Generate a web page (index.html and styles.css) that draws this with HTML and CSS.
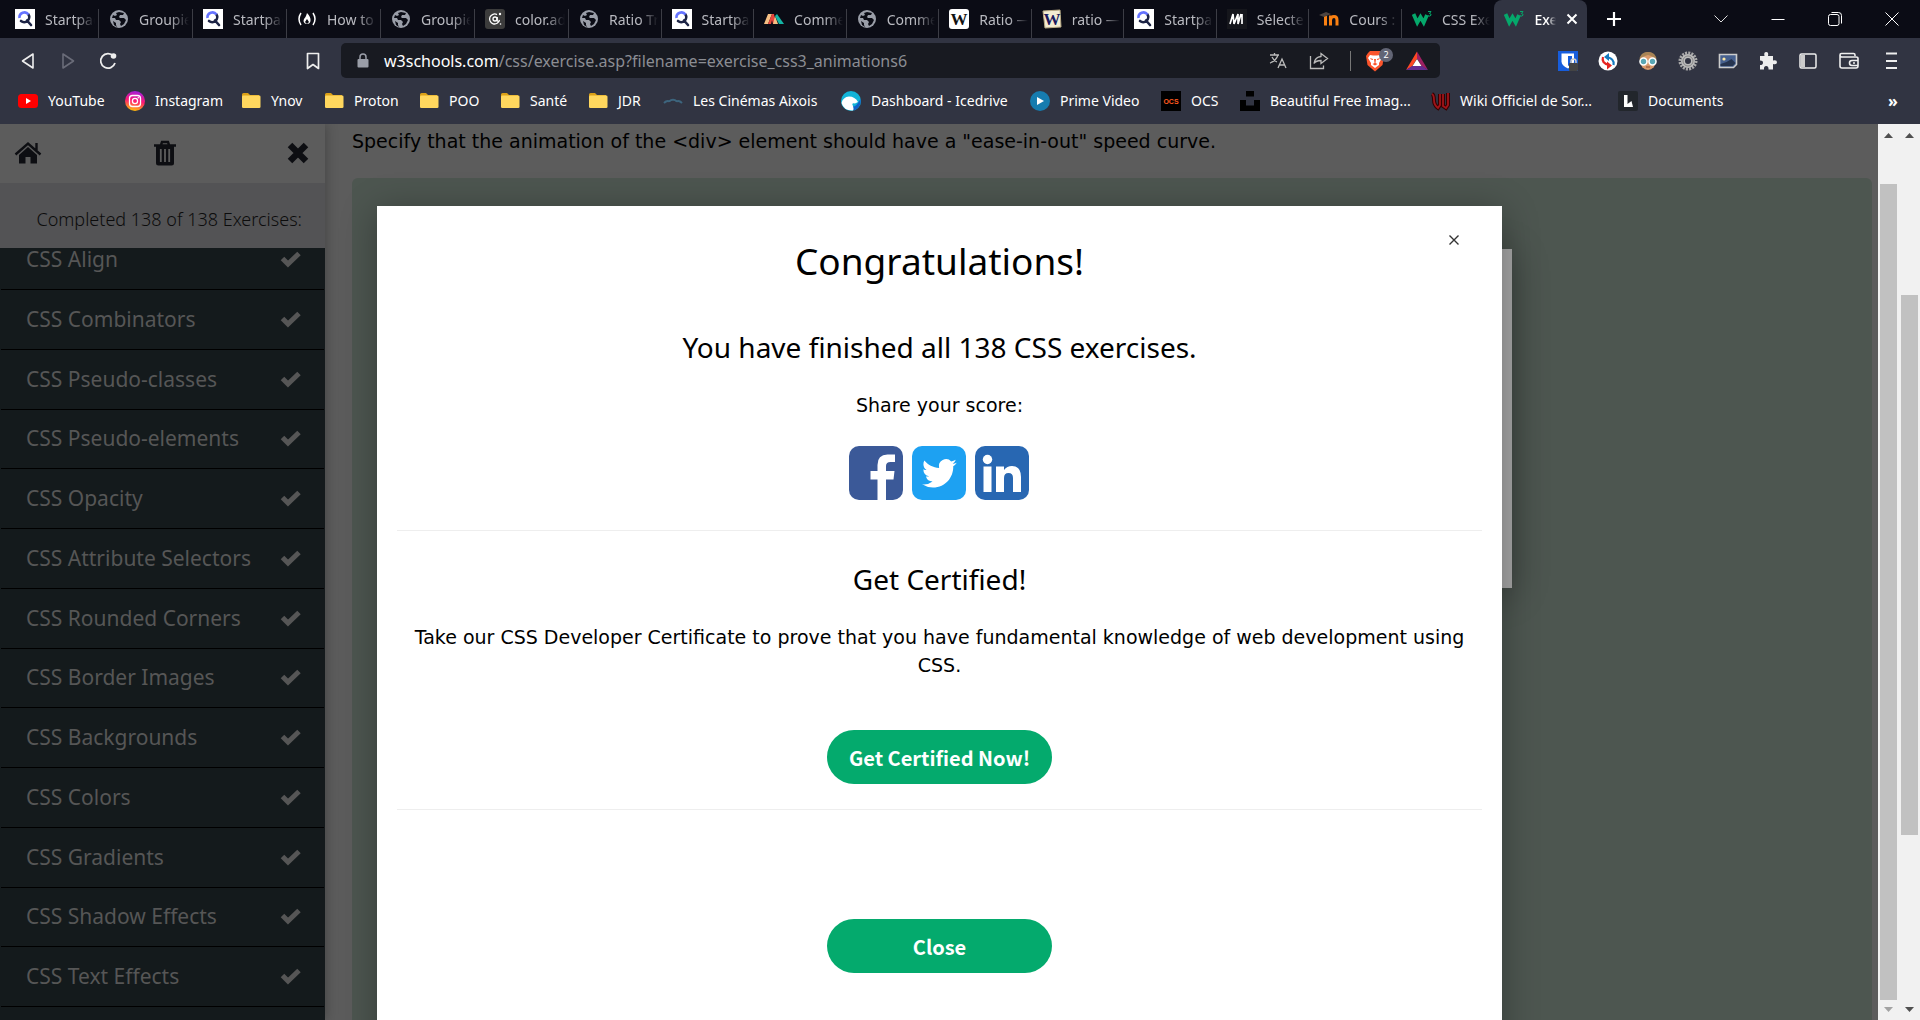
FILE: index.html
```html
<!DOCTYPE html>
<html lang="en">
<head>
<meta charset="utf-8">
<title>CSS Exercise</title>
<link rel="stylesheet" href="styles.css">
</head>
<body>
<svg class="sprite" aria-hidden="true">
  <symbol id="startpage" viewBox="0 0 20 20"><path fill="#fff" d="M0 0h20v20H0z"/><path d="M13.300 5.300A5 5 0 0 1 6 12M12 11.500l4 4.500" fill="none" stroke="#1d2445" stroke-width="2.600" stroke-linecap="round"/><path d="M4.500 9a5 5 0 0 1 9-3.500" fill="none" stroke="#6573ff" stroke-width="2.600"/></symbol>
  <symbol id="globe" viewBox="0 0 20 20"><circle cx="10" cy="10" r="9" fill="#9a9ea8"/><path fill="#0b0c15" d="M10 3l5 1-1 2h-3l-1 2 1 1h4l2 2-2 4-3 2-1-2 1-2-2-2-3 0-1-2H3l1-3 2 1 2-1-1-2zM4 12l3 2v2l1 2-3-2z"/></symbol>
  <symbol id="folder" viewBox="0 0 20 20"><path fill="#dba017" d="M1 3.500Q1 2 2.500 2H7l2 2h9v12H1z"/><rect x="1" y="4.500" width="18.500" height="12.500" rx="1.300" fill="#ffd75e"/></symbol>
  <symbol id="w3" viewBox="0 0 20 20"><path d="M1.500 5l3.800 8.500 3.200-5.500 3.200 5.500L15 6" fill="none" stroke="#05a86b" stroke-width="3.800"/><path d="M16 2.500h3l-1.500 2q2 .3 1.500 1.700-.8 1.500-3 .6" fill="none" stroke="#05a86b"/></symbol>
  <symbol id="check" viewBox="0 0 22 18"><path d="M2.500 8.500l5.500 5.500L19 3.500" fill="none" stroke="currentColor" stroke-width="5"/></symbol>
</svg>

<header class="browser">
  <div class="tabbar">
    <nav class="tabs" aria-label="Tabs">
      <a class="tab" href="#"><svg class="ico"><use href="#startpage"/></svg><span class="tab-label">Startpage</span></a>
      <a class="tab" href="#"><svg class="ico"><use href="#globe"/></svg><span class="tab-label">Groupie</span></a>
      <a class="tab" href="#"><svg class="ico"><use href="#startpage"/></svg><span class="tab-label">Startpage</span></a>
      <a class="tab" href="#"><svg class="ico" viewBox="0 0 20 20"><path d="M4 4q-4 6 0 12M16 4q4 6 0 12" fill="none" stroke="#fff" stroke-width="1.500"/><path fill="#fff" d="M10 4q4 4 3.500 8-.5 3-3.500 3t-3.500-3q0-2 2-4 1-2 1.500-4z"/><path fill="#0b0c15" d="M10 10l2 3-2 2-2-2z"/></svg><span class="tab-label">How to</span></a>
      <a class="tab" href="#"><svg class="ico"><use href="#globe"/></svg><span class="tab-label">Groupie</span></a>
      <a class="tab" href="#"><svg class="ico" viewBox="0 0 20 20"><rect width="20" height="20" rx="3" fill="#3c3c3c"/><path d="M12 5.600a5 5 0 1 0 2.500 5.400q-.5 2-2.300 1V8" fill="none" stroke="#fff" stroke-width="1.300"/><circle cx="10" cy="10" r="2" fill="none" stroke="#fff" stroke-width="1.300"/><circle cx="15" cy="5" r="1.200" fill="#fff"/><circle cx="15.500" cy="15" r=".8" fill="#fff"/></svg><span class="tab-label">color.ad</span></a>
      <a class="tab" href="#"><svg class="ico"><use href="#globe"/></svg><span class="tab-label">Ratio Tr</span></a>
      <a class="tab" href="#"><svg class="ico"><use href="#startpage"/></svg><span class="tab-label">Startpage</span></a>
      <a class="tab" href="#"><svg class="ico" viewBox="0 0 20 20"><path fill="#f6c084" d="M0 15L4 5h4L4 15z"/><path fill="#e8453c" d="M4 15L8 5h2l2 10H9l-1-4-1 4z"/><path fill="#f6c084" d="M9 15l2-8 3 8z"/><path fill="#14b5a5" d="M13 5l7 10h-5l-4-8z"/></svg><span class="tab-label">Comme</span></a>
      <a class="tab" href="#"><svg class="ico"><use href="#globe"/></svg><span class="tab-label">Comme</span></a>
      <a class="tab" href="#"><svg class="ico" viewBox="0 0 20 20"><rect width="20" height="20" rx="3" fill="#fff"/><text x="10" y="16" text-anchor="middle" class="serif-w">W</text></svg><span class="tab-label">Ratio —</span></a>
      <a class="tab" href="#"><svg class="ico" viewBox="0 0 20 20"><path fill="#f3ecd2" stroke="#b9ab86" d="M1 2l17-1 1 17-16 1z"/><text x="10" y="16" text-anchor="middle" class="serif-w navy">W</text></svg><span class="tab-label">ratio —</span></a>
      <a class="tab" href="#"><svg class="ico"><use href="#startpage"/></svg><span class="tab-label">Startpage</span></a>
      <a class="tab" href="#"><svg class="ico" viewBox="0 0 20 20"><path fill="#15161c" d="M0 0h20v20H0z"/><path d="M3 15L6 5l1 10 4-10v10l3-10M15 5v10" fill="none" stroke="#fff" stroke-width="1.700"/></svg><span class="tab-label">Sélecte</span></a>
      <a class="tab" href="#"><svg class="ico" viewBox="0 0 20 20"><path d="M6.500 7v9.500M11.500 16.500V6.500M11.500 11q.5-3.500 3.500-3.500t3 3.500v5.500" fill="none" stroke="#f98012" stroke-width="3"/><path fill="#4d4440" d="M0 6l7-3 5 2-7 3z"/></svg><span class="tab-label">Cours :</span></a>
      <a class="tab last" href="#"><svg class="ico"><use href="#w3"/></svg><span class="tab-label">CSS Exe</span></a>
      <div class="tab active"><svg class="ico"><use href="#w3"/></svg><span class="tab-label">Exe</span><button class="tab-close" aria-label="Close tab"><svg width="12" height="12" viewBox="0 0 12 12"><path d="M1.500 1.500l9 9m0-9l-9 9" stroke="#fff" stroke-width="2"/></svg></button></div>
    </nav>
    <button class="new-tab" aria-label="New tab"><svg width="16" height="16" viewBox="0 0 16 16"><path d="M8 1v14M1 8h14" stroke="#fff" stroke-width="2.200"/></svg></button>
    <div class="window-buttons">
      <button aria-label="Search tabs"><svg width="14" height="14" viewBox="0 0 14 14"><path d="M.5 3.500L7 10l6.500-6.500" fill="none" stroke="#ddd"/></svg></button>
      <button aria-label="Minimise"><svg width="14" height="14" viewBox="0 0 14 14"><path d="M.5 7.500h13" stroke="#fff"/></svg></button>
      <button aria-label="Restore"><svg width="14" height="14" viewBox="0 0 14 14"><rect x=".5" y="2.500" width="10.500" height="11" rx="2" fill="none" stroke="#fff"/><path d="M3.500 .5h7q3 0 3 3v8" fill="none" stroke="#fff"/></svg></button>
      <button aria-label="Close window"><svg width="14" height="14" viewBox="0 0 14 14"><path d="M.5 .5l13 13m0-13l-13 13" stroke="#fff"/></svg></button>
    </div>
  </div>

  <div class="toolbar">
    <div class="history">
      <button aria-label="Back"><svg width="20" height="20" viewBox="0 0 20 20"><path d="M15 3v14L4.500 10z" fill="none" stroke="#eee" stroke-width="1.600" stroke-linejoin="round"/></svg></button>
      <button aria-label="Forward"><svg width="20" height="20" viewBox="0 0 20 20"><path d="M5 3v14l10.500-7z" fill="none" stroke="#6a6c79" stroke-width="1.600" stroke-linejoin="round"/></svg></button>
      <button aria-label="Reload"><svg width="20" height="20" viewBox="0 0 20 20"><path d="M15.500 5A7.300 7.300 0 1 0 17 12" fill="none" stroke="#eee" stroke-width="1.800"/><circle cx="15.500" cy="5" r="2.800" fill="#eee"/></svg></button>
    </div>
    <button class="save" aria-label="Bookmark this page"><svg width="16" height="18" viewBox="0 0 16 18"><path d="M2.500 1.500h11v15L8 12.500l-5.500 4z" fill="none" stroke="#eee" stroke-width="1.700" stroke-linejoin="round"/></svg></button>
    <div class="address">
      <svg width="12" height="16" viewBox="0 0 12 16"><rect x=".5" y="6" width="11" height="8.500" rx="1" fill="#9a9ea8"/><path d="M3 6V4a3 3 0 0 1 6 0v2" fill="none" stroke="#9a9ea8" stroke-width="1.500"/></svg>
      <a class="url" href="#"><span class="host">w3schools.com</span>/css/exercise.asp?filename=exercise_css3_animations6</a>
      <button class="translate" aria-label="Translate"><svg width="18" height="18" viewBox="0 0 18 18"><path d="M1 3h9M5.500 1v2M9 3Q7 9 1 11M3 5q2 4 5 5M9 16l4-9 4 9M10.500 13h5" fill="none" stroke="#bbb" stroke-width="1.300"/></svg></button>
      <button class="share" aria-label="Share"><svg width="20" height="18" viewBox="0 0 20 18"><path d="M1.500 4v12.500h13v-3M12 1.500l6.500 5L12 11.500v-3q-5 0-7 3Q6 5 12 4.500z" fill="none" stroke="#bbb" stroke-width="1.300"/></svg></button>
      <span class="rule"></span>
      <button class="shield" aria-label="Shields"><svg width="20" height="22" viewBox="0 0 20 22"><path fill="#fb542b" d="M5 1h10l2 2 2 3-1.500 9L10 21.500 2.500 15 1 6l2-3z"/><path fill="#fff" d="M5 5l3 .5h4L15 5l2 3-3 5 0 2-4 3-4-3V13L3 8z"/><path fill="#fb542b" d="M5 8l3 1v1L6 9.500zM15 8l-3 1v1l2-.5zM9 9h2l-.5 4 2 1-2.500 1.500L7.500 14l2-1z"/></svg><span class="badge">2</span></button>
      <button class="rewards" aria-label="Rewards"><svg width="22" height="20" viewBox="0 0 22 20"><path fill="#ff4724" d="M11 .5v7L6 15.500 0 19z"/><path fill="#9e1f63" d="M11 .5L22 19l-6-3.500-5-8z"/><path fill="#662d91" d="M0 19h22l-6-4H6z"/><path fill="#fff" d="M11 8l4.500 7h-9z"/></svg></button>
    </div>
    <div class="extensions">
      <button aria-label="Bitwarden"><svg width="20" height="20" viewBox="0 0 20 20"><path fill="#175ddc" d="M0 0h20v20H0z"/><path fill="#fff" d="M3.500 2.500h12.500v8q0 4-6 7-6.500-3-6.500-7z"/><path fill="#175ddc" d="M10 5h4v5q0 3-4 5z"/><rect x="11" y="12" width="9" height="8" rx="1" fill="#444"/><path d="M13 12v-1.500a2.500 2.500 0 0 1 5 0V12" fill="none" stroke="#ccc" stroke-width="1.500"/></svg></button>
      <button aria-label="Sync"><svg width="20" height="20" viewBox="0 0 20 20"><circle cx="10" cy="10" r="9.500" fill="#fff"/><path d="M15.500 14Q17 8 9 6" fill="none" stroke="#167abf" stroke-width="2.200"/><path fill="#167abf" d="M6 6l5-4v8z"/><path d="M5 6q-2 6 6 8" fill="none" stroke="#e52421" stroke-width="2.200"/><path fill="#e52421" d="M14 14.500l-5-4v8z"/></svg></button>
      <button aria-label="Spy"><svg width="20" height="20" viewBox="0 0 20 20"><ellipse cx="10" cy="10" rx="8" ry="9" fill="#d99a6c"/><path fill="#a88455" d="M1.500 9Q2 1 10 1t8.500 8Q15 5 10 4 5 5 1.500 9z"/><circle cx="5.500" cy="10.500" r="3.500" fill="#5aa7b5" stroke="#fff" stroke-width="1.600"/><circle cx="14.500" cy="10.500" r="3.500" fill="#5aa7b5" stroke="#fff" stroke-width="1.600"/><path d="M8 16h4" stroke="#8a4b32"/></svg></button>
      <button aria-label="Settings"><svg width="20" height="20" viewBox="0 0 20 20"><circle cx="10" cy="10" r="8" fill="none" stroke="#aaa" stroke-width="3" stroke-dasharray="2 1.140"/><circle cx="10" cy="10" r="5" fill="none" stroke="#bbb" stroke-width="4"/><circle cx="10" cy="10" r="5" fill="none" stroke="#888"/></svg></button>
      <button aria-label="Wallpaper"><svg width="20" height="20" viewBox="0 0 20 20"><path fill="#47618f" stroke="#ccc" stroke-width="1.600" d="M1.500 3.500h17v10l-3 3h-14z"/><circle cx="6" cy="8" r="1.600" fill="#ffe9a5"/><path fill="#26344f" d="M2.500 13l6-2 5-3 4 4-3 3h-12z"/></svg></button>
      <button aria-label="Extensions"><svg width="20" height="20" viewBox="0 0 20 20"><path fill="#eee" d="M2 5h4.500q-1-4 1.700-4t1.800 4H15v4.500q4-1 4 1.700T15 13v5.500h-4.500q.3-3.500-2.300-3.500T6 18.500H2V14q3 0 3-2.300T2 9.500z"/></svg></button>
      <button aria-label="Sidebar"><svg width="20" height="20" viewBox="0 0 20 20"><rect x="2" y="3" width="16" height="14" rx="1.500" fill="none" stroke="#eee" stroke-width="1.500"/><path fill="#ccc" d="M3 4h4v12H3z"/></svg></button>
      <button class="wide" aria-label="Wallet"><svg width="22" height="20" viewBox="0 0 22 20"><path d="M17 5V4q0-1.500-1.500-1.500h-12Q2 2.500 2 4v11q0 2 2 2h14q2 0 2-2V7.500Q20 6 18 6H4Q2 6 2 4M20 9.500h-6a2.300 2.300 0 0 0 0 5h6M15 12h2" fill="none" stroke="#eee" stroke-width="1.600"/></svg></button>
      <button class="wide" aria-label="Menu"><svg width="20" height="20" viewBox="0 0 20 20"><path d="M5 2.500h11M5 10h11M5 17h11" stroke="#eee" stroke-width="1.800"/></svg></button>
    </div>
  </div>

  <nav class="bookmarks" aria-label="Bookmarks">
    <a href="#"><svg class="ico" viewBox="0 0 20 20"><rect y="3" width="20" height="14" rx="3.500" fill="#f00"/><path fill="#fff" d="M8 7l5 3-5 3z"/></svg>YouTube</a>
    <a href="#"><svg class="ico" viewBox="0 0 20 20"><defs><linearGradient id="ig" x1=".6" y1="0" x2=".4" y2="1"><stop offset="0" stop-color="#a01ee0"/><stop offset=".5" stop-color="#ff1a72"/><stop offset="1" stop-color="#ffc107"/></linearGradient></defs><circle cx="10" cy="10" r="10" fill="url(#ig)"/><rect x="4.500" y="4.500" width="11" height="11" rx="3" fill="none" stroke="#fff" stroke-width="1.300"/><circle cx="10" cy="10" r="2.600" fill="none" stroke="#fff" stroke-width="1.300"/><circle cx="13.300" cy="6.800" r=".8" fill="#fff"/></svg>Instagram</a>
    <a href="#"><svg class="ico"><use href="#folder"/></svg>Ynov</a>
    <a href="#"><svg class="ico"><use href="#folder"/></svg>Proton</a>
    <a href="#"><svg class="ico"><use href="#folder"/></svg>POO</a>
    <a href="#"><svg class="ico"><use href="#folder"/></svg>Santé</a>
    <a href="#"><svg class="ico"><use href="#folder"/></svg>JDR</a>
    <a href="#"><svg class="ico" viewBox="0 0 20 20"><path d="M1 12q3-3 5.500-1.500M19 12q-3-3-5.500-1.500M6 10.500Q10 7 14 10.500" fill="none" stroke="#3d657e" stroke-width="2"/></svg>Les Cinémas Aixois</a>
    <a href="#"><svg class="ico" viewBox="0 0 20 20"><circle cx="10" cy="10" r="10" fill="#12b4d8"/><path fill="#1262c9" d="M19.500 8A10 10 0 0 1 13 19.500q-3-2-2-4 4 1 8.500-7.500z"/><path fill="#fff" d="M.5 12Q2 6 8 5.500q6 0 9 5.500l-3 1.500q-4-1-2 2.500 1 3 0 4.500Q3 20 .5 12z"/></svg>Dashboard - Icedrive</a>
    <a href="#"><svg class="ico" viewBox="0 0 20 20"><circle cx="10" cy="10" r="10" fill="#167caf"/><path fill="#fff" d="M7 6l7 4-7 4z"/></svg>Prime Video</a>
    <a href="#"><svg class="ico" viewBox="0 0 20 20"><path d="M0 0h20v20H0z"/><text x="10" y="13" text-anchor="middle" class="ocs">OCS</text></svg>OCS</a>
    <a href="#"><svg class="ico" viewBox="0 0 20 20"><path d="M6 0h8v5.500H6zM0 9h6v5.500h8V9h6v11H0z"/></svg>Beautiful Free Imag...</a>
    <a href="#"><svg class="ico" viewBox="0 0 20 20"><path d="M2 3q2 1 2 6t4 8l2-3V3M13 3v12l3 2 2-3V2" fill="none" stroke="#300" stroke-width="4"/><path d="M2 3q2 1 2 6t4 8l2-3V3M13 3v12l3 2 2-3V2" fill="none" stroke="#a01419" stroke-width="1.800"/></svg>Wiki Officiel de Sor...</a>
    <a href="#"><svg class="ico" viewBox="0 0 20 20"><rect width="20" height="20" rx="2" fill="#22262c"/><path fill="#fff" d="M6 4h3.500v9l4-3 1.500 6H6z"/></svg>Documents</a>
    <button class="more" aria-label="More bookmarks">»</button>
  </nav>
</header>

<main class="viewport">
  <aside class="sidebar">
    <div class="side-tools">
      <a href="#" aria-label="Home"><svg width="28" height="24" viewBox="0 0 28 24"><path fill="#0d0e12" d="M14 6l9 8v8.500h-6.500V16h-5v6.500H5V14z"/><path d="M1.500 13.500L14 2.500l12.500 11M22.500 2v7" fill="none" stroke="#0d0e12" stroke-width="2.400"/></svg></a>
      <button aria-label="Reset"><svg width="24" height="26" viewBox="0 0 24 26"><path d="M1 5.500h22M8 5l1-3h6l1 3" fill="none" stroke="#0d0e12" stroke-width="2.400"/><path d="M3 6h18v17q0 2.500-2.500 2.500h-13Q3 25.500 3 23z" fill="#0d0e12"/><path d="M7.800 9v13M12 9v13M16.200 9v13" stroke="#5c5c5c" stroke-width="1.800"/></svg></button>
      <button aria-label="Close menu"><svg width="22" height="22" viewBox="0 0 22 22"><path d="M3 3l16 16m0-16L3 19" stroke="#0d0e12" stroke-width="6.400"/></svg></button>
    </div>
    <p class="progress">Completed 138 of 138 Exercises:</p>
    <nav class="chapters" aria-label="Exercises">
      <a href="#">CSS Align<svg class="tick"><use href="#check"/></svg></a>
      <a href="#">CSS Combinators<svg class="tick"><use href="#check"/></svg></a>
      <a href="#">CSS Pseudo-classes<svg class="tick"><use href="#check"/></svg></a>
      <a href="#">CSS Pseudo-elements<svg class="tick"><use href="#check"/></svg></a>
      <a href="#">CSS Opacity<svg class="tick"><use href="#check"/></svg></a>
      <a href="#">CSS Attribute Selectors<svg class="tick"><use href="#check"/></svg></a>
      <a href="#">CSS Rounded Corners<svg class="tick"><use href="#check"/></svg></a>
      <a href="#">CSS Border Images<svg class="tick"><use href="#check"/></svg></a>
      <a href="#">CSS Backgrounds<svg class="tick"><use href="#check"/></svg></a>
      <a href="#">CSS Colors<svg class="tick"><use href="#check"/></svg></a>
      <a href="#">CSS Gradients<svg class="tick"><use href="#check"/></svg></a>
      <a href="#">CSS Shadow Effects<svg class="tick"><use href="#check"/></svg></a>
      <a href="#">CSS Text Effects<svg class="tick"><use href="#check"/></svg></a>
    </nav>
  </aside>

  <section class="exercise">
    <p class="task">Specify that the animation of the &lt;div&gt; element should have a "ease-in-out" speed curve.</p>
    <div class="panel"></div>
  </section>

  <div class="previous-dialog"></div>
  <div class="dialog" role="dialog" aria-labelledby="congrats">
    <button class="dismiss" aria-label="Dismiss"><svg width="12" height="12" viewBox="0 0 12 12"><path d="M1.500 1.500l9 9m0-9l-9 9" stroke="#333" stroke-width="1.400"/></svg></button>
    <h1 id="congrats">Congratulations!</h1>
    <h2>You have finished all 138 CSS exercises.</h2>
    <p>Share your score:</p>
    <div class="social">
      <a href="#" aria-label="Facebook"><svg width="54" height="54" viewBox="0 0 54 54"><rect width="54" height="54" rx="10" fill="#3b5998"/><path fill="#fff" d="M28.500 54V33.500h-7v-8.500h7v-6q0-10.500 10-10.500h7.500v7.500h-4.500q-4.500 0-4.500 4v5h8.500l-1 8.500H37V54z"/></svg></a>
      <a href="#" aria-label="Twitter"><svg width="54" height="54" viewBox="0 0 54 54"><rect width="54" height="54" rx="10" fill="#1da1f2"/><path fill="#fff" transform="translate(10 10) scale(1.450)" d="M23.950 4.570a10 10 0 0 1-2.820.770 4.960 4.960 0 0 0 2.160-2.720c-.950.550-2 .950-3.130 1.180a4.920 4.920 0 0 0-8.380 4.480C7.690 8.100 4.070 6.130 1.640 3.160a4.820 4.820 0 0 0-.660 2.470c0 1.710.870 3.210 2.190 4.100a4.900 4.900 0 0 1-2.230-.620v.060a4.920 4.920 0 0 0 3.950 4.830 5 5 0 0 1-2.210.080 4.940 4.940 0 0 0 4.600 3.420A9.870 9.870 0 0 1 0 19.540a14 14 0 0 0 7.550 2.210c9.050 0 14-7.500 14-13.980 0-.210 0-.420-.020-.630a9.940 9.940 0 0 0 2.460-2.550z"/></svg></a>
      <a href="#" aria-label="LinkedIn"><svg width="54" height="54" viewBox="0 0 54 54"><rect width="54" height="54" rx="10" fill="#2867b2"/><circle cx="12.500" cy="13.500" r="4.700" fill="#fff"/><path fill="#fff" d="M8.500 20.500h8V46h-8zM21 20.500h8V24q3-4 8-4 9 0 9 11v15h-8V32q0-5-4.500-5T29 32v14h-8z"/></svg></a>
    </div>
    <hr>
    <h2>Get Certified!</h2>
    <p>Take our CSS Developer Certificate to prove that you have fundamental knowledge of web development using CSS.</p>
    <button class="pill certify">Get Certified Now!</button>
    <hr>
    <button class="pill close">Close</button>
  </div>

  <div class="scrollbar inner"><span class="arrow up"></span><span class="thumb"></span><span class="arrow down faded"></span></div>
  <div class="scrollbar outer"><span class="arrow up"></span><span class="thumb"></span><span class="arrow down"></span></div>
</main>
</body>
</html>
```
FILE: styles.css
```css
* { box-sizing: border-box; }
body {
  margin: 0;
  height: 100vh;
  display: flex;
  flex-direction: column;
  overflow: hidden;
  background: #5c5c5c;
  font-family: "Noto Sans", "Open Sans", sans-serif;
}
button { margin: 0; padding: 0; border: 0; background: none; font: inherit; color: inherit; cursor: pointer; }
a { color: inherit; text-decoration: none; }
svg { display: block; flex: none; }
.sprite { position: absolute; width: 0; height: 0; }
.ico { width: 20px; height: 20px; }
.serif-w { font: bold 17px "Liberation Serif", serif; fill: #111; }
.navy { fill: #1a1a5e; }
.ocs { font: bold 7px "Liberation Sans", sans-serif; fill: #ff5a1f; }

/* browser chrome */
.browser { flex: none; background: #313442; color: #fff; font-size: 14px; }
.tabbar { display: flex; height: 38px; background: #0b0c15; padding-left: 5px; }
.tabs { display: grid; grid-template-columns: repeat(6, 94px) repeat(11, minmax(0, 1fr)); flex: 0 1 1582px; }
.tab { position: relative; display: flex; align-items: center; padding: 0 4px 0 10px; color: #b9bac0; min-width: 0; }
.tab::after { content: ""; position: absolute; right: 0; top: 9px; bottom: 0; width: 1px; background: #3c3d45; }
.tab.last::after, .tab.active::after { display: none; }
.tab-label {
  flex: 1;
  margin-left: 10px;
  overflow: hidden;
  white-space: nowrap;
  -webkit-mask-image: linear-gradient(90deg, #000 62%, transparent);
  mask-image: linear-gradient(90deg, #000 62%, transparent);
}
.tab.active { background: #313442; color: #fff; border-radius: 8px 8px 0 0; padding-right: 9px; }
.active .tab-label { font-weight: 500; }
.tab-close { margin-left: 10px; }
.new-tab { width: 54px; display: grid; place-items: center; }
.window-buttons { display: flex; margin-left: auto; }
.window-buttons button { width: 57px; display: grid; place-items: center; }

.toolbar { display: flex; align-items: center; height: 45px; padding: 0 8px; }
.history { display: flex; }
.history button, .extensions button { width: 40px; height: 34px; display: grid; place-items: center; }
.extensions .wide { width: 42px; }
.save { margin: 0 20px 0 177px; }
.address {
  flex: 1;
  display: flex;
  align-items: center;
  height: 35px;
  padding: 0 12px 0 16px;
  border-radius: 5px;
  background: #181a21;
}
.url { flex: 1; margin-left: 15px; color: #8b8d93; font-size: 16px; white-space: nowrap; }
.host { color: #fff; }
.share { margin-left: 22px; }
.rule { width: 1px; height: 20px; margin: 0 14px 0 21px; background: #777; }
.shield { position: relative; }
.badge {
  position: absolute;
  left: 14px;
  top: -2px;
  width: 14px;
  height: 14px;
  border-radius: 7px;
  background: #626575;
  font-size: 9px;
  line-height: 14px;
}
.rewards { margin-left: 21px; }
.extensions { display: flex; margin-left: 108px; }

.bookmarks {
  display: grid;
  grid-template-columns: 107px 116px 83px 95px 81px 88px 75px 178px 189px 131px 79px 190px 188px 1fr 38px;
  align-items: center;
  height: 41px;
  padding: 0 8px 6px 18px;
  white-space: nowrap;
}
.bookmarks a { display: flex; align-items: center; gap: 10px; }
.more { font-weight: bold; font-size: 16px; }

/* page */
.viewport { position: relative; flex: 1; min-height: 0; display: flex; overflow: hidden; }
.sidebar {
  flex: none;
  width: 325px;
  display: flex;
  flex-direction: column;
  background: #141a1c;
  box-shadow: 0 0 12px rgba(0, 0, 0, .3);
}
.side-tools { display: flex; justify-content: space-between; align-items: center; height: 59px; padding: 0 16px 2px 14px; background: #5c5c5c; }
.progress {
  margin: 0;
  height: 65px;
  padding: 8px 23px 0 0;
  background: #535355;
  color: #0c0c0c;
  font-size: 18px;
  font-weight: 300;
  line-height: 56px;
  text-align: right;
  white-space: nowrap;
}
.chapters { flex: 1; display: grid; grid-template-rows: 42px repeat(12, 1fr) 13px; padding: 0 1px; overflow: hidden; }
.chapters a {
  display: flex;
  align-items: flex-end;
  justify-content: space-between;
  padding: 0 22px 14px 25px;
  border-bottom: 1px solid #000;
  color: #565656;
  font-size: 21px;
  line-height: 32px;
  white-space: nowrap;
}
.tick { width: 22px; height: 18px; margin-bottom: 7px; }

.exercise { flex: 1; display: flex; flex-direction: column; padding: 0 6px 0 27px; }
.task { margin: 0; height: 54px; font-family: "DejaVu Sans", sans-serif; font-size: 19px; line-height: 34px; white-space: nowrap; }
.panel { flex: 1; border-radius: 6px 6px 0 0; background: #4d5650; }

.previous-dialog {
  position: absolute;
  left: 420px;
  right: 408px;
  top: 125px;
  height: 339px;
  background: #a5a5a5;
  box-shadow: 0 5px 34px rgba(0, 0, 0, .3);
}
.dialog {
  position: absolute;
  left: 377px;
  right: 418px;
  top: 82px;
  bottom: -60px;
  padding: 27px 20px 0;
  background: #fff;
  box-shadow: 0 5px 34px rgba(0, 0, 0, .3);
  color: #000;
  text-align: center;
}
.dismiss { position: absolute; right: 42px; top: 28px; }
.dialog h1 { margin: 0 0 36px; font-size: 37px; font-weight: 400; line-height: 56px; }
.dialog h2 { margin: 0 0 22px; font-size: 28px; font-weight: 400; line-height: 44px; }
.dialog p { margin: 0; font-family: "DejaVu Sans", sans-serif; font-size: 19px; line-height: 28px; }
.social { display: flex; justify-content: center; gap: 9px; margin: 27px 1px 30px 0; }
.dialog hr { height: 1px; margin: 0 0 26px; border: 0; background: #eee; }
.pill {
  display: block;
  width: 225px;
  height: 54px;
  margin: 0 auto;
  border-radius: 27px;
  background: #04aa6d;
  color: #fff;
  font-family: "Noto Sans CJK JP", sans-serif;
  font-size: 20px;
  font-weight: 700;
}
.certify { margin-top: 51px; margin-bottom: 25px; }
.close { margin-top: 109px; }

.scrollbar { flex: none; width: 21px; display: flex; flex-direction: column; padding: 9px 2px 8px; background: #f1f1f1; }
.thumb { flex: 1; width: 17px; background: #c1c1c1; }
.inner .thumb { margin: 46px 0 7px; }
.outer .thumb { margin: 157px 0 172px; }
.arrow { width: 9px; height: 5px; margin: 0 auto; background: #505050; }
.up { clip-path: polygon(50% 0, 100% 100%, 0 100%); }
.down { clip-path: polygon(0 0, 100% 0, 50% 100%); }
.faded { background: #a3a3a3; }
```
